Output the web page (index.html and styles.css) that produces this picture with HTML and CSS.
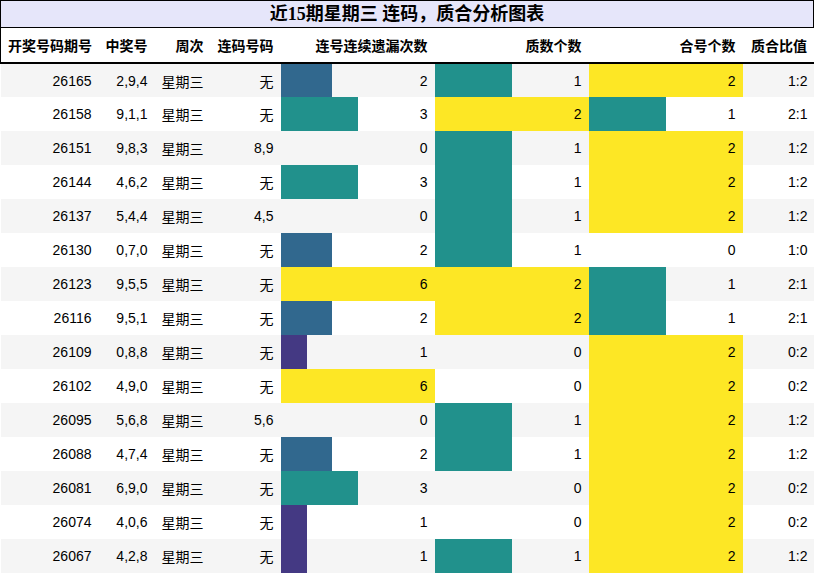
FILE: index.html
```html
<!DOCTYPE html>
<html lang="zh">
<head>
<meta charset="utf-8">
<link rel="stylesheet" href="styles.css">
</head>
<body>
<div class="title">近15期星期三 连码，质合分析图表</div>
<table class="grid">
<colgroup>
<col class="c1"><col class="c2"><col class="c3"><col class="c4"><col class="cb"><col class="cb"><col class="cb"><col class="c8">
</colgroup>
<thead>
<tr><th>开奖号码期号</th><th>中奖号</th><th>周次</th><th>连码号码</th><th>连号连续遗漏次数</th><th>质数个数</th><th>合号个数</th><th>质合比值</th></tr>
</thead>
<tbody>
<tr><td>26165</td><td>2,9,4</td><td class="cjk">星期三</td><td class="cjk">无</td><td class="bar v2" style="--w:33.333%">2</td><td class="bar v3" style="--w:50%">1</td><td class="bar v6" style="--w:100%">2</td><td>1:2</td></tr>
<tr><td>26158</td><td>9,1,1</td><td class="cjk">星期三</td><td class="cjk">无</td><td class="bar v3" style="--w:50%">3</td><td class="bar v6" style="--w:100%">2</td><td class="bar v3" style="--w:50%">1</td><td>2:1</td></tr>
<tr><td>26151</td><td>9,8,3</td><td class="cjk">星期三</td><td>8,9</td><td class="bar" style="--w:0%">0</td><td class="bar v3" style="--w:50%">1</td><td class="bar v6" style="--w:100%">2</td><td>1:2</td></tr>
<tr><td>26144</td><td>4,6,2</td><td class="cjk">星期三</td><td class="cjk">无</td><td class="bar v3" style="--w:50%">3</td><td class="bar v3" style="--w:50%">1</td><td class="bar v6" style="--w:100%">2</td><td>1:2</td></tr>
<tr><td>26137</td><td>5,4,4</td><td class="cjk">星期三</td><td>4,5</td><td class="bar" style="--w:0%">0</td><td class="bar v3" style="--w:50%">1</td><td class="bar v6" style="--w:100%">2</td><td>1:2</td></tr>
<tr><td>26130</td><td>0,7,0</td><td class="cjk">星期三</td><td class="cjk">无</td><td class="bar v2" style="--w:33.333%">2</td><td class="bar v3" style="--w:50%">1</td><td class="bar" style="--w:0%">0</td><td>1:0</td></tr>
<tr><td>26123</td><td>9,5,5</td><td class="cjk">星期三</td><td class="cjk">无</td><td class="bar v6" style="--w:100%">6</td><td class="bar v6" style="--w:100%">2</td><td class="bar v3" style="--w:50%">1</td><td>2:1</td></tr>
<tr><td>26116</td><td>9,5,1</td><td class="cjk">星期三</td><td class="cjk">无</td><td class="bar v2" style="--w:33.333%">2</td><td class="bar v6" style="--w:100%">2</td><td class="bar v3" style="--w:50%">1</td><td>2:1</td></tr>
<tr><td>26109</td><td>0,8,8</td><td class="cjk">星期三</td><td class="cjk">无</td><td class="bar v1" style="--w:16.667%">1</td><td class="bar" style="--w:0%">0</td><td class="bar v6" style="--w:100%">2</td><td>0:2</td></tr>
<tr><td>26102</td><td>4,9,0</td><td class="cjk">星期三</td><td class="cjk">无</td><td class="bar v6" style="--w:100%">6</td><td class="bar" style="--w:0%">0</td><td class="bar v6" style="--w:100%">2</td><td>0:2</td></tr>
<tr><td>26095</td><td>5,6,8</td><td class="cjk">星期三</td><td>5,6</td><td class="bar" style="--w:0%">0</td><td class="bar v3" style="--w:50%">1</td><td class="bar v6" style="--w:100%">2</td><td>1:2</td></tr>
<tr><td>26088</td><td>4,7,4</td><td class="cjk">星期三</td><td class="cjk">无</td><td class="bar v2" style="--w:33.333%">2</td><td class="bar v3" style="--w:50%">1</td><td class="bar v6" style="--w:100%">2</td><td>1:2</td></tr>
<tr><td>26081</td><td>6,9,0</td><td class="cjk">星期三</td><td class="cjk">无</td><td class="bar v3" style="--w:50%">3</td><td class="bar" style="--w:0%">0</td><td class="bar v6" style="--w:100%">2</td><td>0:2</td></tr>
<tr><td>26074</td><td>4,0,6</td><td class="cjk">星期三</td><td class="cjk">无</td><td class="bar v1" style="--w:16.667%">1</td><td class="bar" style="--w:0%">0</td><td class="bar v6" style="--w:100%">2</td><td>0:2</td></tr>
<tr><td>26067</td><td>4,2,8</td><td class="cjk">星期三</td><td class="cjk">无</td><td class="bar v1" style="--w:16.667%">1</td><td class="bar v3" style="--w:50%">1</td><td class="bar v6" style="--w:100%">2</td><td>1:2</td></tr>
</tbody>
</table>
</body>
</html>
```
FILE: styles.css
```css
html, body {
  margin: 0;
  padding: 0;
  background: #ffffff;
}
body {
  width: 814px;
  font-family: "Liberation Sans", "Noto Sans CJK SC", sans-serif;
  font-size: 14px;
  color: #000;
}
.title {
  box-sizing: border-box;
  width: 814px;
  height: 28px;
  border: 1px solid #000;
  background: #e6e6fa;
  font-family: "Liberation Serif", "Noto Sans CJK SC", serif;
  font-weight: bold;
  font-size: 18px;
  line-height: 26px;
  text-align: center;
}
.grid {
  width: 814px;
  border-collapse: collapse;
  table-layout: fixed;
}
.c1 { width: 98px; }
.c2 { width: 56px; }
.c3 { width: 56px; }
.c4 { width: 70px; }
.cb { width: 154px; }
.c8 { width: 72px; }
.grid th {
  height: 34px;
  padding: 0 7px;
  text-align: right;
  font-weight: bold;
  font-size: 14px;
  border-bottom: 2px solid #000;
  white-space: nowrap;
}
.grid th:first-child { border-left: 1px solid #000; }
.grid th:last-child { border-right: 1px solid #000; }
.grid td {
  height: 34px;
  padding: 0 7px;
  text-align: right;
  white-space: nowrap;
  box-sizing: border-box;
}
.grid tbody tr:nth-child(odd) td { background-color: #f5f5f5; }
.grid tbody tr:nth-child(even) td { background-color: #ffffff; }
.cjk { font-family: "Noto Sans CJK SC", sans-serif; }
.grid tbody tr td.bar {
  background-image: linear-gradient(90deg, var(--c, transparent) var(--w), transparent var(--w));
}
.v1 { --c: #443983; }
.v2 { --c: #31688e; }
.v3 { --c: #21918c; }
.v6 { --c: #fde725; }
```
